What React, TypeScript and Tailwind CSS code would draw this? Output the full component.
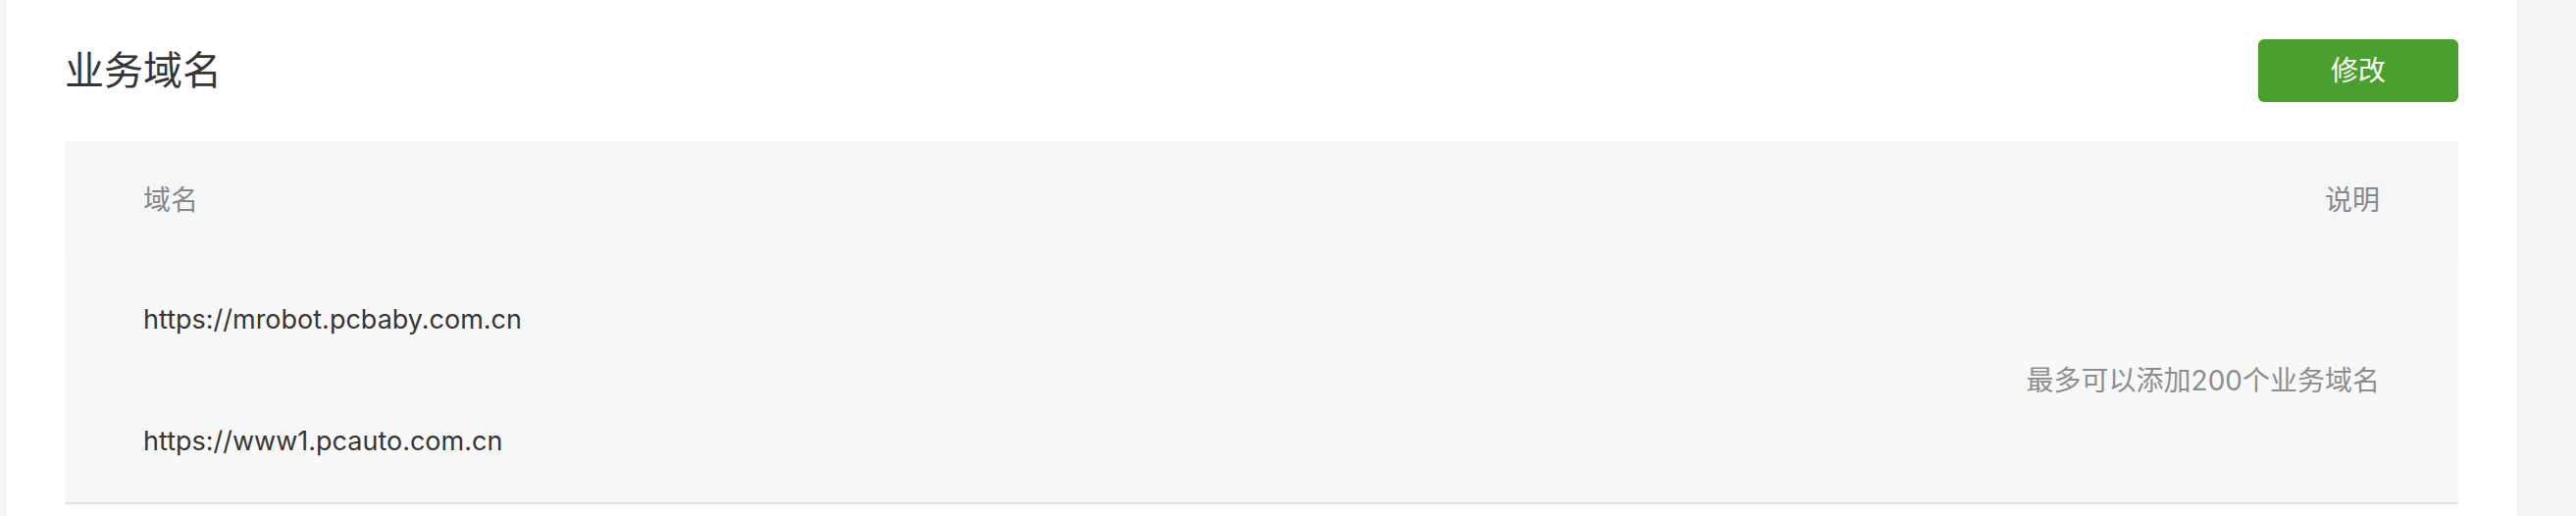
const domains = ['https://mrobot.pcbaby.com.cn', 'https://www1.pcauto.com.cn'];

export default function App() {
  return (
    <div className="flex h-[526px] w-[2626px] overflow-hidden bg-white font-['Inter','Noto_Sans_CJK_SC',sans-serif]">
      {/* left edge */}
      <div className="w-[6px] shrink-0 border-r border-[#e9ebef] bg-[#f4f5f7]" />

      {/* main card */}
      <main className="flex-1 px-[60px] pt-[40px]">
        <div className="flex h-[64px] items-center justify-between">
          <h2 className="text-[40px] leading-none text-[#353535]">业务域名</h2>
          <button
            type="button"
            className="h-[64px] w-[204px] rounded-[6px] bg-[#4a9f2f] text-[28px] text-white"
          >
            修改
          </button>
        </div>

        <div className="mt-[40px] border-b-2 border-[#e2e2e8]">
          <div className="flex h-[120px] items-center justify-between bg-[#f5f6f7] px-[80px] text-[28px] text-[#888]">
            <span>域名</span>
            <span>说明</span>
          </div>
          <div className="flex bg-[#f8f8f8] px-[80px]">
            <div className="flex-1">
              {domains.map((d) => (
                <div key={d} className="flex h-[124px] items-center text-[27px] text-[#353535]">
                  {d}
                </div>
              ))}
            </div>
            <div className="flex items-center text-[28px] text-[#8d8d8d]">最多可以添加200个业务域名</div>
          </div>
        </div>
      </main>

      {/* right panel */}
      <div className="w-[60px] shrink-0 border-l border-[#ebedf0] bg-[#f4f5f7]" />
    </div>
  );
}
